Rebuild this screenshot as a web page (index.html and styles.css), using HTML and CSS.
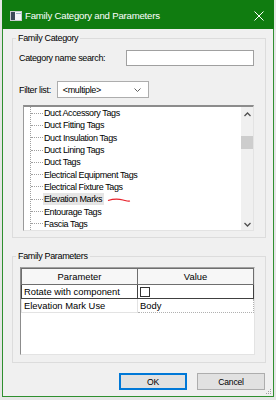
FILE: index.html
```html
<!DOCTYPE html>
<html lang="en">
<head>
  <meta charset="UTF-8">
  <meta name="viewport" content="width=device-width, initial-scale=1">
  <title>Family Category and Parameters</title>
  <link rel="stylesheet" href="styles.css">
</head>
<body>
  <div class="window">
    <!-- Barra de titulo -->
    <div class="titlebar">
      <svg class="app-icon" width="12" height="10" viewBox="0 0 12 10">
        <rect x="0.5" y="0.5" width="11" height="9" fill="#f4f6f8" stroke="#c8ccd0"/>
        <rect x="1" y="1" width="4" height="8" fill="#3c4a58"/>
        <rect x="6" y="2" width="5" height="1" fill="#9fb4c8"/>
      </svg>
      <span class="title">Family Category and Parameters</span>
      <svg class="close" width="10" height="10" viewBox="0 0 10 10">
        <path d="M0.5 0.5 L9.5 9.5 M9.5 0.5 L0.5 9.5" stroke="#fff" stroke-width="1"/>
      </svg>
    </div>

    <div class="content">
      <!-- Family Category -->
      <fieldset class="group group-category">
        <legend>Family Category</legend>
        <div class="field-row">
          <label for="search">Category name search:</label>
          <input type="text" id="search" class="search">
        </div>
        <div class="field-row filter-row">
          <label>Filter list:</label>
          <div class="combo">
            <span>&lt;multiple&gt;</span>
            <svg width="7" height="4" viewBox="0 0 7 4"><path d="M0.5 0.5 L3.5 3.5 L6.5 0.5" fill="none" stroke="#606060"/></svg>
          </div>
        </div>
        <div class="tree">
          <ul class="tree-items">
            <li><span class="branch"></span><span class="item-text">Duct Accessory Tags</span></li>
            <li><span class="branch"></span><span class="item-text">Duct Fitting Tags</span></li>
            <li><span class="branch"></span><span class="item-text">Duct Insulation Tags</span></li>
            <li><span class="branch"></span><span class="item-text">Duct Lining Tags</span></li>
            <li><span class="branch"></span><span class="item-text">Duct Tags</span></li>
            <li><span class="branch"></span><span class="item-text">Electrical Equipment Tags</span></li>
            <li><span class="branch"></span><span class="item-text">Electrical Fixture Tags</span></li>
            <li><span class="branch"></span><span class="item-text selected">Elevation Marks</span>
              <svg class="mark" width="24" height="5" viewBox="0 0 24 5"><path d="M1 2.5 C6 1, 12 1, 16 2 S21 3.5, 23 3" fill="none" stroke="#e8202a" stroke-width="1.2"/></svg>
            </li>
            <li><span class="branch"></span><span class="item-text">Entourage Tags</span></li>
            <li><span class="branch"></span><span class="item-text">Fascia Tags</span></li>
          </ul>
          <div class="scrollbar">
            <svg width="7" height="5" viewBox="0 0 7 5"><path d="M0.5 4 L3.5 1 L6.5 4" fill="none" stroke="#505050" stroke-width="1.3"/></svg>
            <div class="track"><div class="thumb"></div></div>
            <svg width="7" height="5" viewBox="0 0 7 5"><path d="M0.5 1 L3.5 4 L6.5 1" fill="none" stroke="#505050" stroke-width="1.3"/></svg>
          </div>
        </div>
      </fieldset>

      <!-- Family Parameters -->
      <fieldset class="group group-params">
        <legend>Family Parameters</legend>
        <div class="grid">
          <table>
            <tr class="head">
              <th>Parameter</th>
              <th>Value</th>
            </tr>
            <tr class="current">
              <td>Rotate with component</td>
              <td><span class="check"></span></td>
            </tr>
            <tr>
              <td>Elevation Mark Use</td>
              <td class="dotted">Body</td>
            </tr>
          </table>
        </div>
      </fieldset>

      <div class="buttons">
        <button class="default">OK</button>
        <button>Cancel</button>
      </div>
    </div>

    <svg class="grip" width="5" height="5" viewBox="0 0 5 5">
      <rect x="4" y="0" width="1" height="1" fill="#a0a0a0"/>
      <rect x="2" y="2" width="1" height="1" fill="#a0a0a0"/>
      <rect x="4" y="2" width="1" height="1" fill="#a0a0a0"/>
      <rect x="0" y="4" width="1" height="1" fill="#a0a0a0"/>
      <rect x="2" y="4" width="1" height="1" fill="#a0a0a0"/>
      <rect x="4" y="4" width="1" height="1" fill="#a0a0a0"/>
    </svg>
  </div>
</body>
</html>
```

FILE: styles.css
```css
body {
  margin: 0;
  background: #e6e6e6;
  font-family: "Liberation Sans", Arial, sans-serif;
  font-size: 9px;
  letter-spacing: -0.35px;
  color: #000;
}
.window {
  position: relative;
  margin-left: 2px;
  width: 272px;
  height: 397px;
  box-sizing: border-box;
  border: 1px solid #2f8f2f;
  border-top: none;
  background: #f0f0f0;
}
.titlebar {
  height: 29px;
  margin: 0 -1px;
  background: #107c10;
  display: flex;
  align-items: center;
  padding-left: 8px;
  color: #fff;
}
.app-icon {
  margin-top: 2px;
}
.title {
  margin-left: 3px;
  font-size: 9.6px;
  letter-spacing: -0.2px;
  margin-top: 2px;
}
.close {
  margin-left: auto;
  margin-right: 10px;
  margin-top: 2px;
}
.content {
  padding: 3px 7px 0 9px;
}
.group {
  margin: 0;
  border: 1px solid #dcdcdc;
  padding: 0 11px 6px 6px;
  min-width: 0;
}
.group legend {
  padding: 0 2px;
  margin-left: -3px;
  line-height: 12px;
}
.field-row {
  display: flex;
  align-items: center;
  margin-top: 6px;
}
.search {
  margin-left: auto;
  width: 128px;
  height: 16px;
  box-sizing: border-box;
  border: 1px solid #a0a0a0;
  background: #fff;
  padding: 0;
}
.filter-row {
  margin-top: 15px;
}
.combo {
  margin-left: 6px;
  width: 92px;
  height: 17px;
  box-sizing: border-box;
  border: 1px solid #adadad;
  background: #fff;
  display: flex;
  align-items: center;
  justify-content: space-between;
  padding: 0 7px 0 5px;
}
.tree {
  margin: 7px 0 0 4px;
  height: 126px;
  box-sizing: border-box;
  border: 1px solid #e3e3e3;
  border-top: 2px solid #8c8c8c;
  border-left: 1px solid #9a9a9a;
  background: #fff;
  display: flex;
}
.tree-items {
  flex: 1;
  list-style: none;
  margin: 0 0 0 6px;
  padding: 0;
  border-left: 1px dotted #a0a0a0;
  letter-spacing: -0.4px;
}
.tree-items li {
  display: flex;
  align-items: center;
  height: 12.3px;
}
.branch {
  width: 12px;
  border-top: 1px dotted #a0a0a0;
}
.item-text {
  padding: 0 2px 0 1px;
  line-height: 12px;
}
.item-text.selected {
  background: #e5e5e5;
}
.mark {
  margin-left: 3px;
  margin-top: 3px;
}
.scrollbar {
  width: 12px;
  background: #f0f0f0;
  display: flex;
  flex-direction: column;
  align-items: center;
  padding: 5px 0 3px;
}
.track {
  flex: 1;
  width: 100%;
  padding-top: 19px;
}
.thumb {
  height: 13px;
  background: #cdcdcd;
}
.group-params {
  margin-top: 12px;
  padding: 0 10px 7px 7px;
}
.group-params legend {
  margin-left: -4px;
}
.grid {
  margin-top: 5px;
  height: 88px;
  box-sizing: border-box;
  border: 1px solid #e3e3e3;
  border-top: 1px solid #a0a0a0;
  border-left: 1px solid #8c8c8c;
  background: #fff;
}
.grid table {
  width: 100%;
  border-collapse: collapse;
  font-size: 9.4px;
  letter-spacing: 0;
}
.grid th {
  height: 15px;
  font-weight: normal;
  background: #f7f7f7;
  border: 1px solid #6e6e6e;
  padding: 0;
  width: 50%;
}
.grid td {
  height: 13px;
  padding: 0 0 0 2px;
  border: 1px solid #e3e3e3;
}
.grid tr.current td {
  border: 1px solid #404040;
}
.grid td.dotted {
  border: 1px dotted #b0b0b0;
}
.check {
  display: block;
  width: 8px;
  height: 8px;
  border: 1px solid #333;
  background: #fff;
}
.buttons {
  display: flex;
  justify-content: flex-end;
  gap: 10px;
  margin-top: 10px;
  padding-right: 1px;
}
.buttons button {
  width: 68px;
  height: 17px;
  box-sizing: border-box;
  border: 1px solid #adadad;
  background: #e1e1e1;
  font-family: "Liberation Sans", Arial, sans-serif;
  font-size: 8.6px;
  letter-spacing: -0.2px;
  padding: 0;
}
.buttons button.default {
  border: 2px solid #0078d7;
}
.grip {
  position: absolute;
  right: 2px;
  bottom: 2px;
}
```
